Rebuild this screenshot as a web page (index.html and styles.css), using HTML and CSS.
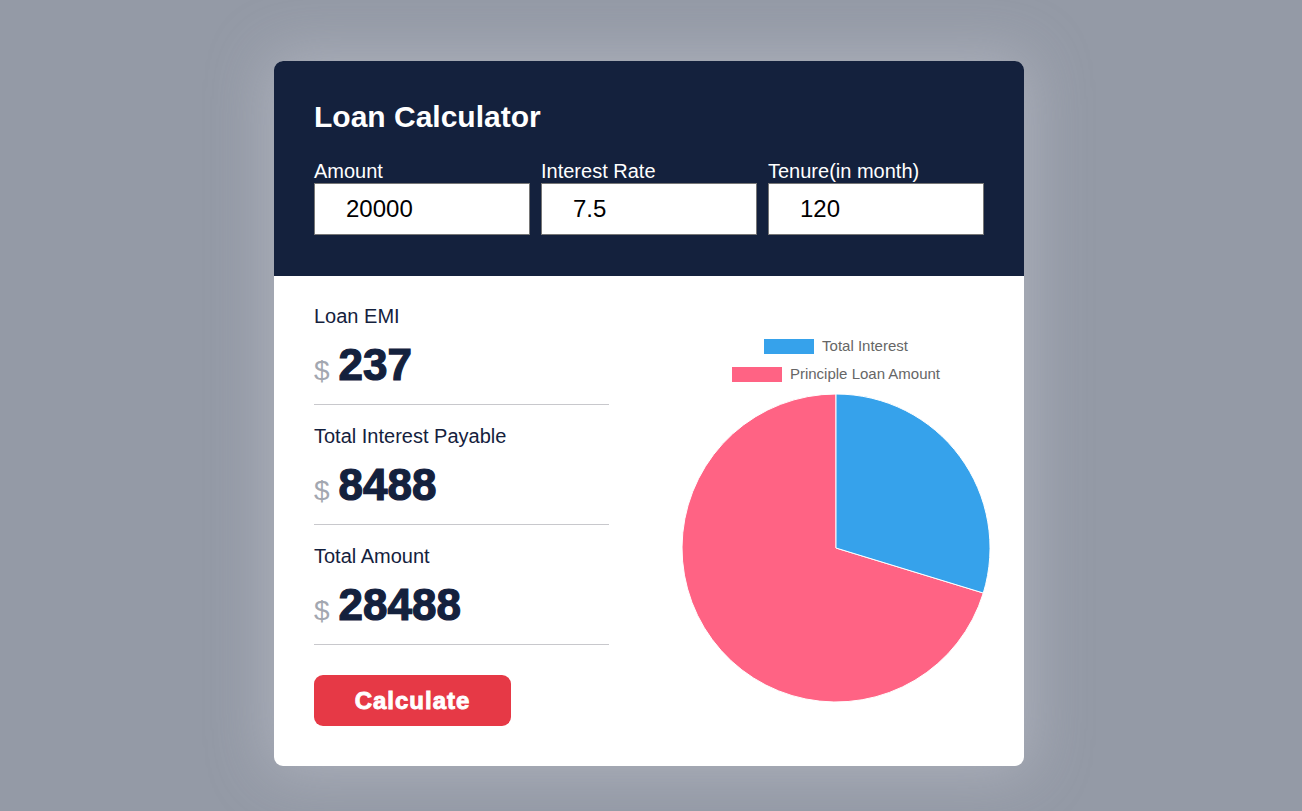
FILE: index.html
```html
<!DOCTYPE html>
<html>
<head>
<meta charset="utf-8">
<link rel="stylesheet" href="styles.css">
</head>
<body>
<div class="card">
  <div class="header">
    <h1 class="title">Loan Calculator</h1>
    <div class="inputs">
      <div class="field">
        <label class="label">Amount</label>
        <input class="input" type="text" value="20000">
      </div>
      <div class="field">
        <label class="label">Interest Rate</label>
        <input class="input" type="text" value="7.5">
      </div>
      <div class="field">
        <label class="label">Tenure(in month)</label>
        <input class="input" type="text" value="120">
      </div>
    </div>
  </div>
  <div class="body">
    <div class="results">
      <div class="row">
        <div class="row-label">Loan EMI</div>
        <div class="row-value"><span class="cur">$</span><span class="num">237</span></div>
      </div>
      <div class="row">
        <div class="row-label">Total Interest Payable</div>
        <div class="row-value"><span class="cur">$</span><span class="num">8488</span></div>
      </div>
      <div class="row">
        <div class="row-label">Total Amount</div>
        <div class="row-value"><span class="cur">$</span><span class="num">28488</span></div>
      </div>
      <button class="btn">Calculate</button>
    </div>
    <div class="chart">
      <div class="legend">
        <div class="legend-item"><span class="swatch blue"></span><span>Total Interest</span></div>
        <div class="legend-item"><span class="swatch pink"></span><span>Principle Loan Amount</span></div>
      </div>
      <svg class="pie" width="310" height="310" viewBox="0 0 310 310">
        <path d="M155 155 L155 1 A154 154 0 1 0 302.3 200 Z" fill="#ff6384" stroke="#fff" stroke-width="1"/>
        <path d="M155 155 L155 1 A154 154 0 0 1 302.3 200 Z" fill="#36a2eb" stroke="#fff" stroke-width="1"/>
      </svg>
    </div>
  </div>
</div>
</body>
</html>
```
FILE: styles.css
```css
* { box-sizing: border-box; }
html, body { margin: 0; padding: 0; }
body {
  background: #949aa6;
  font-family: "Liberation Sans", Arial, sans-serif;
  display: flex;
  justify-content: center;
  padding: 61px 4px 0 0;
  height: 811px;
  overflow: hidden;
}
.card {
  width: 750px;
  height: 705px;
  background: #fff;
  border-radius: 9px;
  overflow: hidden;
  box-shadow: 0 0 60px 6px rgba(220, 222, 228, 0.35);
}
.header {
  background: #14213d;
  padding: 40px;
  height: 215px;
}
.title {
  margin: 0 0 27px 0;
  color: #fff;
  font-size: 30px;
  line-height: 32px;
  font-weight: bold;
}
.inputs {
  display: flex;
  gap: 11px;
}
.field {
  flex: 1;
  display: flex;
  flex-direction: column;
}
.label {
  color: #fff;
  font-size: 20px;
  line-height: 23px;
}
.input {
  height: 52px;
  border: 1px solid #767676;
  padding: 0 0 0 31px;
  font-family: "Liberation Sans", Arial, sans-serif;
  font-size: 24px;
  color: #000;
  background: #fff;
  outline: none;
  width: 100%;
}
.body {
  display: flex;
  padding: 9px 40px 40px 40px;
}
.results {
  flex: 0 0 295px;
  display: flex;
  flex-direction: column;
  align-items: flex-start;
}
.row {
  width: 100%;
  padding: 20px 0 14px 0;
  border-bottom: 1px solid #c8c8cc;
}
.row-label {
  font-size: 20px;
  line-height: 23px;
  color: #14213d;
}
.row-value {
  margin-top: 12px;
  line-height: 50px;
  height: 50px;
  white-space: nowrap;
  display: flex;
  align-items: baseline;
  gap: 9px;
}
.cur {
  font-size: 28px;
  color: #a3a7b0;
}
.num {
  font-size: 44px;
  font-weight: bold;
  color: #14213d;
  -webkit-text-stroke: 1.2px #14213d;
}
.btn {
  margin-top: 30px;
  width: 197px;
  height: 51px;
  border: none;
  border-radius: 9px;
  background: #e63946;
  color: #fff;
  font-family: "Liberation Sans", Arial, sans-serif;
  font-size: 24px;
  font-weight: bold;
  letter-spacing: 1px;
  -webkit-text-stroke: 0.9px #fff;
  padding: 0;
}
.chart {
  flex: 0 0 310px;
  margin-left: 72px;
  display: flex;
  flex-direction: column;
  align-items: center;
  padding-top: 53px;
}
.legend {
  display: flex;
  flex-direction: column;
  align-items: center;
  gap: 12px;
  margin-bottom: 11px;
}
.legend-item {
  display: flex;
  align-items: center;
  gap: 8px;
  font-size: 15px;
  line-height: 16px;
  height: 16px;
  color: #666;
}
.swatch {
  display: inline-block;
  width: 50px;
  height: 15px;
}
.swatch.blue { background: #36a2eb; }
.swatch.pink { background: #ff6384; }
.pie { display: block; }
```
